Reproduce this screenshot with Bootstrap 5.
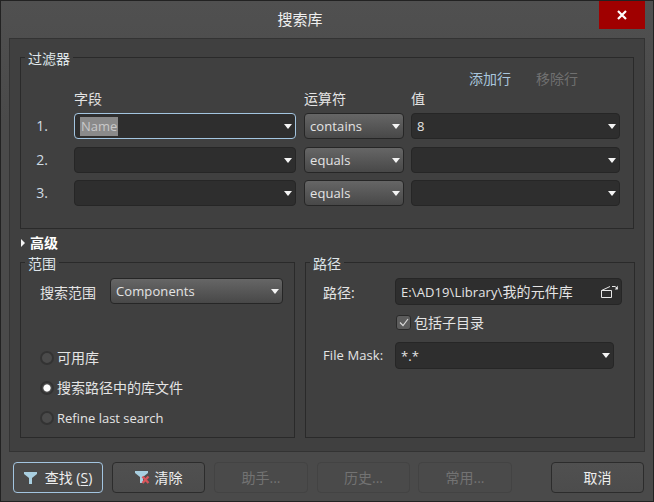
<!DOCTYPE html>
<html lang="zh-CN">
<head>
<meta charset="utf-8">
<title>搜索库</title>
<link href="https://cdn.jsdelivr.net/npm/bootstrap@5.3.0/dist/css/bootstrap.min.css" rel="stylesheet">
<style>
html,body{margin:0;background:#4a4a4a}
body{width:654px;height:502px;overflow:hidden;font-family:"Open Sans","Noto Sans CJK SC",sans-serif;font-size:14px;line-height:20px;color:#e4e4e4}
.dlg{width:654px;height:502px;border:1px solid #222;background:linear-gradient(#505050,#4a4a4a 120px);box-sizing:border-box}
.tbar{height:37px}
.ttl{font-size:15px;padding-top:8px;color:#f0f0f0;line-height:20px}
.xbtn{width:46px;height:28px;background:#a00000;margin-right:8px;border:0;padding:0;border-radius:0}
.pnl{height:414px;margin:0 8px;border:1px solid #333;background:#404040;padding:6px 9px 0 10px}
.grp{border:1px solid #2a2a2a;margin:0;padding:0;min-width:0}
.grp legend{float:none;width:auto;font-size:14px;line-height:20px;padding:4px 3px 0;margin:0 0 0 4px;color:#dfe6ea}
.g1{width:614px;height:184px}
.g2{width:275px;height:188px;padding-left:19px}
.g3{width:330px;height:188px;padding-left:17px}
.g2 legend{margin-left:-15px}
.g3 legend{margin-left:-13px}
.acts{height:18px;margin-left:448px}
.acts span+span{margin-left:25px;color:#707070}
.lnk{color:#a9c6de}
.hdrs{height:20px;margin-top:2px}
.cl{width:53px;text-align:right;padding-right:26px;font-size:14px;line-height:26px;color:#d0dce4}
.ca{width:222px}.cb{width:100px;margin-left:8px}.cc{width:209px;margin-left:7px}
.fr{height:26px}
.m4{margin-top:4px}.m8{margin-top:8px}.m7{margin-top:7px}
.cbx{height:26px;border-radius:4px;border:1px solid #262626;padding:0 3px 0 5px;font-size:13px;line-height:24px;letter-spacing:.1px;color:#e4e4e4}
.cbx svg{flex:none}
.dk{background:#2e2e2e}
.lt{background:linear-gradient(#666,#484848)}
.foc{border-color:#a3c5e0}
.sel{background:#8a8a8a;color:#c8c8c8;display:inline-block;height:19px;line-height:19px;padding:0 1px;letter-spacing:0}
.adv{height:20px;margin:4px 0 -3px 1px;font-weight:700;font-size:14px;color:#fff}
.adv svg{margin-right:5px}
.lw{width:70px;line-height:26px;padding-top:2px}
.cmb2{width:173px}
.rad{height:30px;font-size:14px}
.rad .lat{font-size:13px}
.rd{width:14px;height:14px;border-radius:50%;border:2px solid #333;background:#4b4b4b;margin-right:3px;flex:none}
.rd.on{background:radial-gradient(circle,#fff 0 3.2px,#4b4b4b 4px)}
.lw2{width:72px;line-height:27px}
.pth{width:227px;height:27px}
.pth b{font-weight:400;font-size:14px}
.mask{width:219px;height:27px}
.lw2.f{font-size:13px;letter-spacing:.1px}
.ck{width:15px;height:15px;border-radius:3px;border:1px solid #2a2a2a;background:#5c5c5c;margin-left:1px;margin-right:3px;flex:none}
.chkrow{height:15px;margin-top:9px;margin-left:72px;line-height:15px}
.foot{padding:10px 9px 0 12px}
.bb{height:31px;border-radius:4px;border:1px solid #2c2c2c;background:linear-gradient(#505050,#4c4c4c);color:#eee;font-size:14px;line-height:20px;padding:0}
.bb:hover{color:#eee;background:#505050;border-color:#2c2c2c}
.bb.pri{border-color:#a3c5e0;width:90px;background:#4a4a4a}
.bb.dis{border-color:#434343;background:#4a4a4a;color:#737373;opacity:1}
.b2{width:93px;margin-left:9px}
.b3{width:94px;margin-left:9px}
.b4{width:93px;margin-left:9px}
.b5{width:94px;margin-left:8px}
.b6{width:93px}
.u{text-decoration:underline;text-underline-offset:2px}
.radio-first{margin-top:37px}
.mask-row{margin-top:12px}
.pthrow .lw2{padding-top:1px}
.ic2{margin-right:5px}
</style>
</head>
<body>
<div class="dlg d-flex flex-column">
  <div class="tbar d-flex">
    <div class="ttl flex-grow-1 text-center">搜索库</div>
    <button type="button" class="xbtn d-flex align-items-center justify-content-center" aria-label="关闭">
      <svg width="10" height="10" viewBox="0 0 10 10"><path d="M1 1l8 8M9 1l-8 8" stroke="#fff" stroke-width="2.2" fill="none"/></svg>
    </button>
  </div>
  <div class="pnl">
    <fieldset class="grp g1">
      <legend>过滤器</legend>
      <div class="acts d-flex"><span class="lnk">添加行</span><span>移除行</span></div>
      <div class="hdrs d-flex">
        <div class="cl"></div><div class="ca">字段</div><div class="cb">运算符</div><div class="cc">值</div>
      </div>
      <div class="fr d-flex m4">
        <div class="cl">1.</div>
        <div class="ca cbx dk foc d-flex align-items-center justify-content-between"><span class="sel">Name</span><svg width="8" height="5" viewBox="0 0 8 5"><path d="M0 0h8L4 5z" fill="#f4f4f4"/></svg></div>
        <div class="cb cbx lt d-flex align-items-center justify-content-between"><span>contains</span><svg width="8" height="5" viewBox="0 0 8 5"><path d="M0 0h8L4 5z" fill="#f4f4f4"/></svg></div>
        <div class="cc cbx dk d-flex align-items-center justify-content-between"><span>8</span><svg width="8" height="5" viewBox="0 0 8 5"><path d="M0 0h8L4 5z" fill="#f4f4f4"/></svg></div>
      </div>
      <div class="fr d-flex m8">
        <div class="cl">2.</div>
        <div class="ca cbx dk d-flex align-items-center justify-content-end"><svg width="8" height="5" viewBox="0 0 8 5"><path d="M0 0h8L4 5z" fill="#f4f4f4"/></svg></div>
        <div class="cb cbx lt d-flex align-items-center justify-content-between"><span>equals</span><svg width="8" height="5" viewBox="0 0 8 5"><path d="M0 0h8L4 5z" fill="#f4f4f4"/></svg></div>
        <div class="cc cbx dk d-flex align-items-center justify-content-end"><svg width="8" height="5" viewBox="0 0 8 5"><path d="M0 0h8L4 5z" fill="#f4f4f4"/></svg></div>
      </div>
      <div class="fr d-flex m7">
        <div class="cl">3.</div>
        <div class="ca cbx dk d-flex align-items-center justify-content-end"><svg width="8" height="5" viewBox="0 0 8 5"><path d="M0 0h8L4 5z" fill="#f4f4f4"/></svg></div>
        <div class="cb cbx lt d-flex align-items-center justify-content-between"><span>equals</span><svg width="8" height="5" viewBox="0 0 8 5"><path d="M0 0h8L4 5z" fill="#f4f4f4"/></svg></div>
        <div class="cc cbx dk d-flex align-items-center justify-content-end"><svg width="8" height="5" viewBox="0 0 8 5"><path d="M0 0h8L4 5z" fill="#f4f4f4"/></svg></div>
      </div>
    </fieldset>
    <div class="adv d-flex align-items-center"><svg width="4" height="8" viewBox="0 0 4 8"><path d="M0 0l4 4-4 4z" fill="#f4f4f4"/></svg><span>高级</span></div>
    <div class="d-flex justify-content-between">
      <fieldset class="grp g2">
        <legend>范围</legend>
        <div class="d-flex m4">
          <div class="lw">搜索范围</div>
          <div class="cmb2 cbx lt d-flex align-items-center justify-content-between"><span>Components</span><svg width="8" height="5" viewBox="0 0 8 5"><path d="M0 0h8L4 5z" fill="#f4f4f4"/></svg></div>
        </div>
        <div class="rad d-flex align-items-center radio-first"><span class="rd"></span><span>可用库</span></div>
        <div class="rad d-flex align-items-center"><span class="rd on"></span><span>搜索路径中的库文件</span></div>
        <div class="rad d-flex align-items-center"><span class="rd"></span><span class="lat">Refine last search</span></div>
      </fieldset>
      <fieldset class="grp g3">
        <legend>路径</legend>
        <div class="d-flex m4 pthrow">
          <div class="lw2">路径:</div>
          <div class="pth cbx dk d-flex align-items-center justify-content-between"><span>E:\AD19\Library\<b>我的元件库</b></span>
            <svg width="17" height="13" viewBox="0 0 17 13"><path d="M.5 5.5h10v7H.5zM.5 5.500L9 1.500M11 1.500h3l2.500 2" stroke="#e8e8e8" fill="none"/><path d="M16.800 .5v4h-3z" fill="#e8e8e8"/></svg>
          </div>
        </div>
        <div class="chkrow d-flex">
          <span class="ck d-flex align-items-center justify-content-center"><svg width="10" height="9" viewBox="0 0 10 9"><path d="M1 4.500l3 3 5-6.500" stroke="#d8d8d8" stroke-width="1.200" fill="none"/></svg></span>
          <span>包括子目录</span>
        </div>
        <div class="d-flex mask-row">
          <div class="lw2 f">File Mask:</div>
          <div class="mask cbx dk d-flex align-items-center justify-content-between"><span>*.*</span><svg width="8" height="5" viewBox="0 0 8 5"><path d="M0 0h8L4 5z" fill="#f4f4f4"/></svg></div>
        </div>
      </fieldset>
    </div>
  </div>
  <div class="foot d-flex">
    <button type="button" class="btn bb pri d-flex align-items-center justify-content-center">
      <svg class="me-2" width="13" height="12" viewBox="0 0 13 12"><path d="M0 0h13v2L8 6v6H5V6L0 2z" fill="#a9cfe0"/></svg><span>查找 (<span class="u">S</span>)</span>
    </button>
    <button type="button" class="btn bb b2 d-flex align-items-center justify-content-center">
      <svg class="ic2" width="15" height="14" viewBox="0 0 15 14"><path d="M0 0h13v2L8 6v6H5V6L0 2z" fill="#a9cfe0"/><path d="M7.500 5.500l6 6.500M13.500 5.500l-6 6.500" stroke="#d9545a" stroke-width="2.400" fill="none"/></svg><span>清除</span>
    </button>
    <button type="button" class="btn bb dis b3" disabled>助手...</button>
    <button type="button" class="btn bb dis b4" disabled>历史...</button>
    <button type="button" class="btn bb dis b5" disabled>常用...</button>
    <button type="button" class="btn bb b6 ms-auto">取消</button>
  </div>
</div>
</body>
</html>
